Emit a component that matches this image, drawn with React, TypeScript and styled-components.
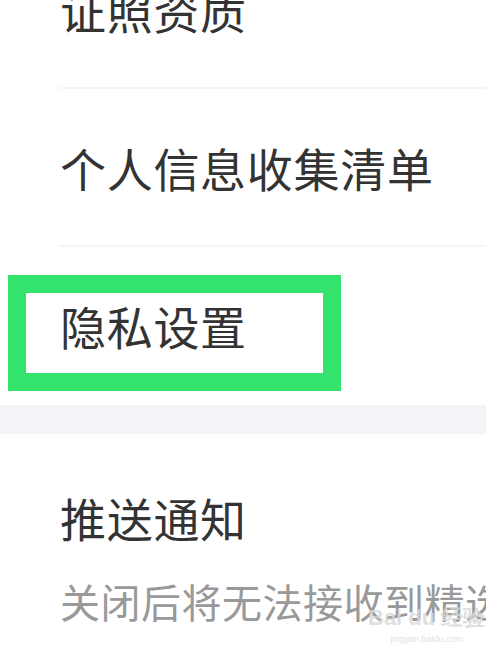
import styled, { createGlobalStyle } from "styled-components";

const GlobalStyle = createGlobalStyle`
  html, body {
    margin: 0;
    padding: 0;
    background: #ffffff;
    overflow: hidden;
  }
  body {
    font-family: "Noto Sans CJK SC", "Noto Sans", sans-serif;
  }
`;

const Page = styled.div`
  position: relative;
  width: 486px;
  height: 657px;
  overflow: hidden;
  background: #ffffff;
`;

const List = styled.div`
  margin-top: -69px;
`;

const Row = styled.div<{ $divider?: boolean }>`
  position: relative;
  margin-left: 60px;
  height: 156px;
  display: flex;
  align-items: center;
  border-bottom: 2px solid ${(p) => (p.$divider ? "#f5f5f5" : "transparent")};
  font-size: 46px;
  line-height: 56px;
  letter-spacing: 0.7px;
  color: #333333;
  white-space: nowrap;
`;

const Highlight = styled.div`
  position: absolute;
  left: -52px;
  top: 28px;
  width: 333px;
  height: 116px;
  box-sizing: border-box;
  border: 18px solid #33e36b;
  pointer-events: none;
`;

const Gap = styled.div`
  height: 29px;
  background: #f3f4f8;
`;

const SwitchRow = styled.div`
  padding: 55px 0 0 60px;
`;

const Title = styled.div`
  font-size: 46px;
  line-height: 56px;
  letter-spacing: 0.7px;
  color: #333333;
  white-space: nowrap;
`;

const Hint = styled.div`
  margin-top: 31px;
  font-size: 40px;
  line-height: 50px;
  letter-spacing: 0.5px;
  color: #999999;
  white-space: nowrap;
`;

const Watermark = styled.div`
  position: absolute;
  left: 368px;
  top: 604px;
  color: rgba(215, 215, 215, 0.8);
  font-family: "Liberation Sans", sans-serif;
  text-align: center;
  pointer-events: none;

  .brand {
    font-size: 22px;
    line-height: 28px;
    font-weight: 700;
  }
  .site {
    font-size: 9px;
    line-height: 14px;
  }
`;

const rows = ["证照资质", "个人信息收集清单"];

export default function App() {
  return (
    <Page>
      <GlobalStyle />
      <List>
        {rows.map((label) => (
          <Row key={label} $divider>
            {label}
          </Row>
        ))}
        <Row>
          隐私设置
          <Highlight />
        </Row>
        <Gap />
        <SwitchRow>
          <Title>推送通知</Title>
          <Hint>关闭后将无法接收到精选内容推送</Hint>
        </SwitchRow>
      </List>
      <Watermark>
        <div className="brand">Bai du 经验</div>
        <div className="site">jingyan.baidu.com</div>
      </Watermark>
    </Page>
  );
}
